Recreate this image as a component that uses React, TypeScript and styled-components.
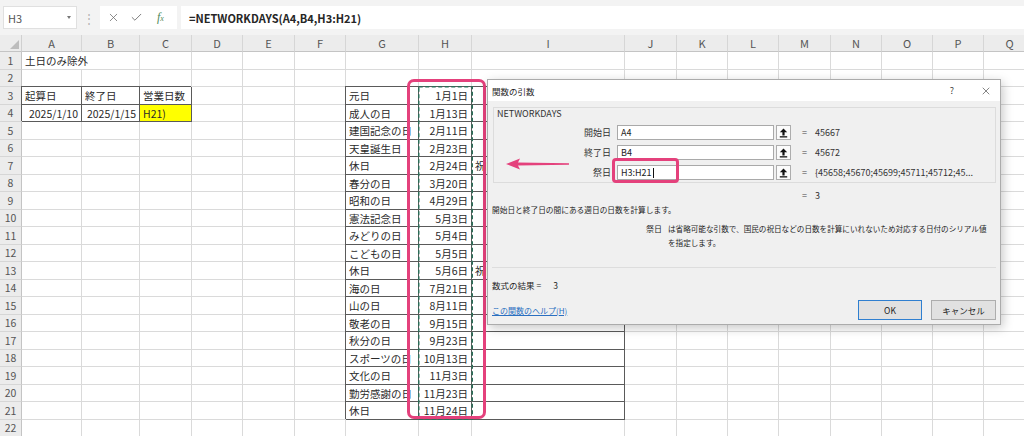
import React from 'react';
import styled, { createGlobalStyle, css } from 'styled-components';
import { X, Check } from 'lucide-react';

const GlobalStyle = createGlobalStyle`
  html, body {
    margin: 0;
    padding: 0;
    background: #fff;
  }

  body {
    font-family: 'Noto Sans CJK JP', 'Noto Sans', sans-serif;
    color: #222;
  }
`;

const COLUMNS = [
  { id: 'A', w: 60 },
  { id: 'B', w: 58 },
  { id: 'C', w: 52 },
  { id: 'D', w: 51 },
  { id: 'E', w: 52 },
  { id: 'F', w: 51 },
  { id: 'G', w: 73 },
  { id: 'H', w: 53 },
  { id: 'I', w: 153 },
  { id: 'J', w: 52 },
  { id: 'K', w: 51 },
  { id: 'L', w: 51 },
  { id: 'M', w: 52 },
  { id: 'N', w: 51 },
  { id: 'O', w: 51 },
  { id: 'P', w: 51 },
  { id: 'Q', w: 52 },
];

const ROW_COUNT = 22;

const HOLIDAYS: [string, string, string?][] = [
  ['元日', '1月1日'],
  ['成人の日', '1月13日'],
  ['建国記念の日', '2月11日'],
  ['天皇誕生日', '2月23日'],
  ['休日', '2月24日', '祝日法による振替休日'],
  ['春分の日', '3月20日'],
  ['昭和の日', '4月29日'],
  ['憲法記念日', '5月3日'],
  ['みどりの日', '5月4日'],
  ['こどもの日', '5月5日'],
  ['休日', '5月6日', '祝日法による振替休日'],
  ['海の日', '7月21日'],
  ['山の日', '8月11日'],
  ['敬老の日', '9月15日'],
  ['秋分の日', '9月23日'],
  ['スポーツの日', '10月13日'],
  ['文化の日', '11月3日'],
  ['勤労感謝の日', '11月23日'],
  ['休日', '11月24日'],
];

type CellSpec = {
  text?: string;
  align?: 'left' | 'right';
  boxed?: boolean;
  fill?: string;
  span?: number;
};

const cells: Record<string, CellSpec> = {
  A1: { text: '土日のみ除外', span: 2 },
  A3: { text: '起算日', boxed: true },
  B3: { text: '終了日', boxed: true },
  C3: { text: '営業日数', boxed: true },
  A4: { text: '2025/1/10', align: 'right', boxed: true },
  B4: { text: '2025/1/15', align: 'right', boxed: true },
  C4: { text: 'H21)', boxed: true, fill: '#ffff00' },
};

HOLIDAYS.forEach(([name, date, note], i) => {
  const row = i + 3;
  cells[`G${row}`] = { text: name, boxed: true };
  cells[`H${row}`] = { text: date, align: 'right', boxed: true };
  cells[`I${row}`] = { text: note, boxed: true };
});

const Screen = styled.div`
  position: relative;
  width: 1024px;
  height: 436px;
  overflow: hidden;
  background: #fff;
`;

/* formula bar */

const FormulaBar = styled.div`
  display: flex;
  align-items: center;
  height: 35px;
  padding: 0 0 0 3px;
  box-sizing: border-box;
  background: #f3f3f3;
`;

const NameBox = styled.div`
  display: flex;
  align-items: center;
  justify-content: space-between;
  width: 74px;
  height: 23px;
  padding: 0 5px 0 4px;
  box-sizing: border-box;
  background: #fff;
  border: 1px solid #e0e0e0;
  font-size: 11px;
  color: #555;
`;

const DropCaret = styled.span`
  width: 0;
  height: 0;
  border-left: 2.5px solid transparent;
  border-right: 2.5px solid transparent;
  border-top: 3px solid #777;
`;

const Grip = styled.span`
  width: 23px;
  text-align: center;
  font-size: 12px;
  color: #b4b4b4;
`;

const FxBox = styled.div`
  display: flex;
  align-items: center;
  height: 23px;
  padding: 0 4px 0 7px;
  box-sizing: border-box;
  background: #fff;
  gap: 10px;
  color: #6a6a6a;
`;

const FxGlyph = styled.span`
  width: 16px;
  font-family: 'Liberation Serif', serif;
  font-style: italic;
  font-size: 12px;
  color: #4f8a5b;
  margin-left: 4px;

  sub {
    font-size: 8px;
    vertical-align: baseline;
  }
`;

const FormulaInput = styled.div`
  flex: 1;
  display: flex;
  align-items: center;
  height: 23px;
  margin-left: 4px;
  padding-left: 8px;
  background: #fff;
  font-size: 11px;
  font-weight: 600;
  color: #262626;
`;

/* sheet */

const Sheet = styled.div`
  display: grid;
  grid-template-columns: 22px ${COLUMNS.map((c) => `${c.w}px`).join(' ')};
  grid-template-rows: 17px repeat(${ROW_COUNT}, 17.5px);
  width: max-content;
  font-size: 10.5px;
`;

const Corner = styled.div`
  position: relative;
  background: #ececec;
  border-right: 1px solid #d0d0d0;
  border-bottom: 1px solid #c4c4c4;
  box-sizing: border-box;

  &::after {
    content: '';
    position: absolute;
    right: 2px;
    bottom: 2px;
    border-left: 9px solid transparent;
    border-bottom: 9px solid #bdbdbd;
  }
`;

const ColHeader = styled.div`
  display: flex;
  align-items: center;
  justify-content: center;
  background: #ececec;
  border-right: 1px solid #d6d6d6;
  border-bottom: 1px solid #c4c4c4;
  box-sizing: border-box;
  font-size: 11px;
  color: #555;
`;

const RowHeader = styled.div`
  display: flex;
  align-items: center;
  justify-content: center;
  background: #ececec;
  border-right: 1px solid #c4c4c4;
  border-bottom: 1px solid #d6d6d6;
  box-sizing: border-box;
  font-size: 10.5px;
  color: #555;
`;

const Cell = styled.div<{ $align?: 'left' | 'right'; $boxed?: boolean; $fill?: string; $span?: number }>`
  grid-column: span ${({ $span }) => $span ?? 1};
  display: flex;
  align-items: center;
  justify-content: ${({ $align }) => ($align === 'right' ? 'flex-end' : 'flex-start')};
  padding: 1px 3px 0 3px;
  box-sizing: border-box;
  border-right: 1px solid #dadada;
  border-bottom: 1px solid #dadada;
  background: ${({ $fill }) => $fill ?? 'transparent'};
  white-space: nowrap;
  overflow: hidden;
  color: #2a2a2a;

  ${({ $boxed }) =>
    $boxed &&
    css`
      border-right-color: #5a5a5a;
      border-bottom-color: #5a5a5a;
      box-shadow: -1px -1px 0 #5a5a5a;
    `}
`;

/* annotations over the sheet */

const CopyMarquee = styled.svg`
  position: absolute;
  left: 418px;
  top: 86px;
`;

const PinkFrame = styled.div<{ $radius: number }>`
  position: absolute;
  box-sizing: border-box;
  border: 3px solid #e4417c;
  border-radius: ${({ $radius }) => $radius}px;
  pointer-events: none;
`;

const PinkArrow = styled.svg`
  position: absolute;
  left: 505px;
  top: 157px;
`;

/* dialog */

const Dialog = styled.div`
  position: absolute;
  left: 487px;
  top: 79px;
  width: 514px;
  height: 246px;
  box-sizing: border-box;
  display: flex;
  flex-direction: column;
  background: #f0f0f0;
  border: 1px solid #ababab;
  box-shadow: 2px 3px 10px rgba(0, 0, 0, 0.22);
  font-size: 8px;
  color: #1e1e1e;
`;

const TitleBar = styled.div`
  display: flex;
  align-items: center;
  height: 21px;
  padding-left: 4px;
  background: #fff;
  font-size: 8.5px;
`;

const Title = styled.span`
  flex: 1;
`;

const TitleButton = styled.span<{ $gap?: number }>`
  display: flex;
  align-items: center;
  justify-content: center;
  width: 28px;
  height: 21px;
  margin-right: ${({ $gap }) => $gap ?? 0}px;
  font-size: 9px;
  color: #444;
`;

const DialogBody = styled.div`
  display: flex;
  flex-direction: column;
  padding: 0 4px 4px;
`;

const GroupBox = styled.div`
  height: 76px;
  margin: 6px 0 0 1px;
  padding-left: 3px;
  box-sizing: border-box;
  border: 1px solid #dcdcdc;
`;

const GroupLabel = styled.div`
  height: 12px;
  line-height: 12px;
  font-size: 9px;
  color: #333;
`;

const ArgList = styled.div`
  display: flex;
  flex-direction: column;
  gap: 5px;
  margin-top: 5px;
`;

const ArgRow = styled.div`
  display: flex;
  align-items: center;
  height: 15px;
  font-size: 9px;
`;

const ArgLabel = styled.span`
  width: 114px;
  text-align: right;
  color: #333;
`;

const ArgInput = styled.div`
  display: flex;
  align-items: center;
  width: 157px;
  height: 15px;
  margin-left: 6px;
  padding: 0 3px;
  box-sizing: border-box;
  background: #fff;
  border: 1px solid #a9a9a9;
  color: #222;
`;

const TextCaret = styled.span`
  width: 1px;
  height: 10px;
  margin-left: 1px;
  background: #111;
`;

const RefButton = styled.span`
  display: flex;
  align-items: center;
  justify-content: center;
  width: 15px;
  height: 15px;
  margin-left: 2px;
  box-sizing: border-box;
  background: #fbfbfb;
  border: 1px solid #adadad;
`;

const Equals = styled.span`
  margin-left: 11px;
  color: #444;
`;

const ArgValue = styled.span`
  margin-left: 8px;
  color: #333;
  white-space: nowrap;
`;

const ResultEq = styled.div`
  height: 12px;
  margin-top: 6px;
  padding-left: 310px;
  display: flex;
  align-items: center;
  font-size: 9px;
  color: #444;
`;

const Summary = styled.div`
  height: 12px;
  line-height: 12px;
  margin-top: 3px;
  font-size: 7.7px;
`;

const ArgHelp = styled.div`
  display: flex;
  margin-top: 6px;
  line-height: 14px;
  font-size: 7.6px;
`;

const ArgHelpName = styled.span`
  width: 22px;
  margin-left: 154px;
  font-size: 8px;
`;

const ArgHelpText = styled.span`
  width: 320px;
  white-space: nowrap;
`;

const Separator = styled.div`
  height: 1px;
  margin-top: 17px;
  background: #dddddd;
`;

const ResultLine = styled.div`
  height: 12px;
  margin-top: 11px;
  display: flex;
  align-items: center;
  font-size: 8.5px;

  b {
    font-weight: 400;
    margin-left: 12px;
  }
`;

const Footer = styled.div`
  display: flex;
  align-items: center;
  height: 20px;
  margin-top: 9px;
`;

const HelpLink = styled.a`
  flex: 1;
  color: #2a6fc0;
  text-decoration: underline;
  font-size: 8px;
`;

const DialogButton = styled.button<{ $primary?: boolean; $w: number }>`
  width: ${({ $w }) => $w}px;
  height: 20px;
  margin-left: 9px;
  padding: 0;
  box-sizing: border-box;
  background: #e1e1e1;
  border: 1px solid ${({ $primary }) => ($primary ? '#2f7fd0' : '#adadad')};
  font-family: inherit;
  font-size: 8.5px;
  color: #222;
`;

function RefIcon() {
  return (
    <svg width="9" height="10" viewBox="0 0 9 10">
      <path d="M4.5 0.5 L8.2 4.2 H5.6 V7.4 H3.4 V4.2 H0.8 Z" fill="#111" />
      <rect x="0.8" y="8.2" width="7.4" height="1.3" fill="#111" />
    </svg>
  );
}

function FunctionDialog() {
  const args = [
    { label: '開始日', value: 'A4', result: '45667' },
    { label: '終了日', value: 'B4', result: '45672' },
    { label: '祭日', value: 'H3:H21', result: '{45658;45670;45699;45711;45712;45...', caret: true },
  ];

  return (
    <Dialog>
      <TitleBar>
        <Title>関数の引数</Title>
        <TitleButton $gap={6}>?</TitleButton>
        <TitleButton>
          <X size={12} strokeWidth={1.2} color="#333" />
        </TitleButton>
      </TitleBar>
      <DialogBody>
        <GroupBox>
          <GroupLabel>NETWORKDAYS</GroupLabel>
          <ArgList>
            {args.map((arg) => (
              <ArgRow key={arg.label}>
                <ArgLabel>{arg.label}</ArgLabel>
                <ArgInput>
                  {arg.value}
                  {arg.caret && <TextCaret />}
                </ArgInput>
                <RefButton>
                  <RefIcon />
                </RefButton>
                <Equals>=</Equals>
                <ArgValue>{arg.result}</ArgValue>
              </ArgRow>
            ))}
          </ArgList>
        </GroupBox>
        <ResultEq>
          =<ArgValue>3</ArgValue>
        </ResultEq>
        <Summary>開始日と終了日の間にある週日の日数を計算します。</Summary>
        <ArgHelp>
          <ArgHelpName>祭日</ArgHelpName>
          <ArgHelpText>
            は省略可能な引数で、国民の祝日などの日数を計算にいれないため対応する日付のシリアル値
            <br />
            を指定します。
          </ArgHelpText>
        </ArgHelp>
        <Separator />
        <ResultLine>
          数式の結果 =<b>3</b>
        </ResultLine>
        <Footer>
          <HelpLink>この関数のヘルプ(H)</HelpLink>
          <DialogButton $primary $w={64}>
            OK
          </DialogButton>
          <DialogButton $w={65}>キャンセル</DialogButton>
        </Footer>
      </DialogBody>
    </Dialog>
  );
}

function SheetGrid() {
  const rows = Array.from({ length: ROW_COUNT }, (_, i) => i + 1);

  return (
    <Sheet>
      <Corner />
      {COLUMNS.map((c) => (
        <ColHeader key={c.id}>{c.id}</ColHeader>
      ))}
      {rows.map((r) => {
        const out: React.ReactNode[] = [<RowHeader key={`h${r}`}>{r}</RowHeader>];
        let skip = 0;
        COLUMNS.forEach((c) => {
          if (skip > 0) {
            skip -= 1;
            return;
          }
          const spec = cells[`${c.id}${r}`] ?? {};
          if (spec.span) skip = spec.span - 1;
          out.push(
            <Cell
              key={`${c.id}${r}`}
              $align={spec.align}
              $boxed={spec.boxed}
              $fill={spec.fill}
              $span={spec.span}
            >
              {spec.text}
            </Cell>,
          );
        });
        return out;
      })}
    </Sheet>
  );
}

export default function App() {
  return (
    <>
      <GlobalStyle />
      <Screen>
        <FormulaBar>
          <NameBox>
            H3
            <DropCaret />
          </NameBox>
          <Grip>⋮</Grip>
          <FxBox>
            <X size={13} strokeWidth={1.4} />
            <Check size={13} strokeWidth={1.6} />
            <FxGlyph>
              f<sub>x</sub>
            </FxGlyph>
          </FxBox>
          <FormulaInput>=NETWORKDAYS(A4,B4,H3:H21)</FormulaInput>
        </FormulaBar>

        <SheetGrid />

        <CopyMarquee width="55" height="334" viewBox="0 0 55 334">
          <rect
            x="0.75"
            y="0.75"
            width="53.5"
            height="332.5"
            fill="none"
            stroke="#2b6e58"
            strokeWidth="1.5"
            strokeDasharray="4 2.5"
          />
        </CopyMarquee>
        <PinkFrame $radius={7} style={{ left: 407, top: 79, width: 79, height: 340 }} />

        <FunctionDialog />

        <PinkFrame $radius={4} style={{ left: 612, top: 158, width: 67, height: 25 }} />
        <PinkArrow width="66" height="14" viewBox="0 0 66 14">
          <polygon
            points="1,7 15,1.5 13,5.4 64,6.3 64,7.7 13,8.6 15,12.5"
            fill="#e4417c"
          />
        </PinkArrow>
      </Screen>
    </>
  );
}
